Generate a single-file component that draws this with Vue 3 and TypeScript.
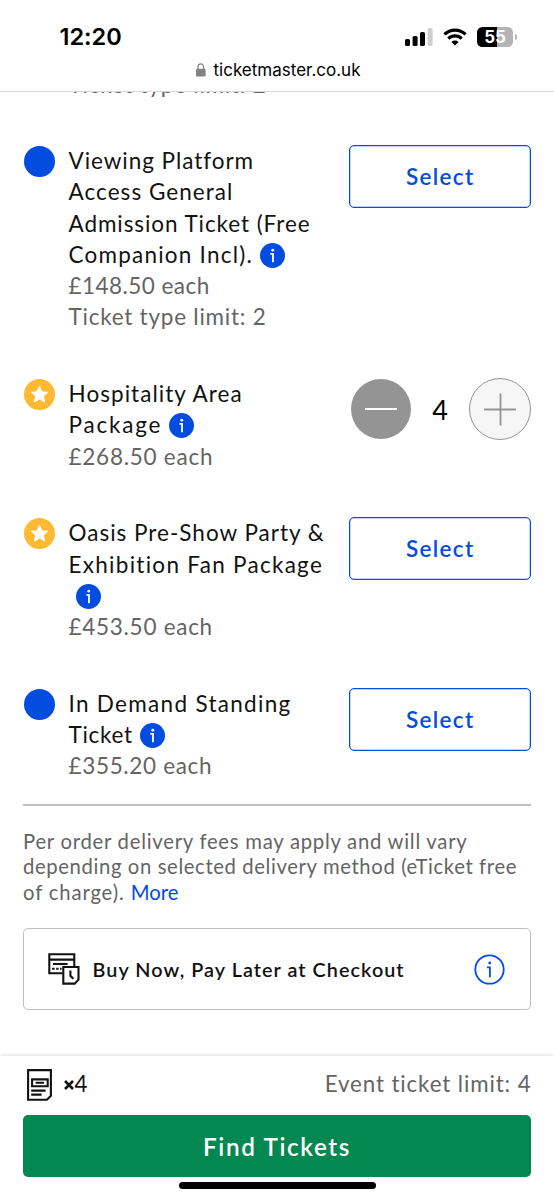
<script setup lang="ts">
import { ref } from 'vue'

interface Line {
  text: string
  tracking: number
  muted?: boolean
  info?: boolean
}

interface Ticket {
  id: string
  kind: 'standard' | 'package'
  stepper: boolean
  lines: Line[]
}

const quantity = ref(4)

const tickets: Ticket[] = [
  {
    id: 'viewing-platform',
    kind: 'standard',
    stepper: false,
    lines: [
      { text: 'Viewing Platform', tracking: 0.95 },
      { text: 'Access General', tracking: 1.05 },
      { text: 'Admission Ticket (Free', tracking: 0.92 },
      { text: 'Companion Incl).', tracking: 1.22, info: true },
      { text: '£148.50 each', tracking: 0.45, muted: true },
      { text: 'Ticket type limit: 2', tracking: 0.76, muted: true },
    ],
  },
  {
    id: 'hospitality',
    kind: 'package',
    stepper: true,
    lines: [
      { text: 'Hospitality Area', tracking: 1.05 },
      { text: 'Package', tracking: 1.8, info: true },
      { text: '£268.50 each', tracking: 0.75, muted: true },
    ],
  },
  {
    id: 'pre-show',
    kind: 'package',
    stepper: false,
    lines: [
      { text: 'Oasis Pre-Show Party &', tracking: 1 },
      { text: 'Exhibition Fan Package', tracking: 1.28 },
      { text: '', tracking: 0, info: true },
      { text: '£453.50 each', tracking: 0.72, muted: true },
    ],
  },
  {
    id: 'standing',
    kind: 'standard',
    stepper: false,
    lines: [
      { text: 'In Demand Standing', tracking: 1.3 },
      { text: 'Ticket', tracking: 0.7, info: true },
      { text: '£355.20 each', tracking: 0.66, muted: true },
    ],
  },
]
</script>

<template>
  <div class="screen">
    <header class="top">
      <div class="status">
        <span class="clock">12:20</span>
        <div class="indicators">
          <svg class="signal" viewBox="0 0 28 18" width="28" height="18">
            <rect x="0" y="11" width="5" height="7" rx="1.6" />
            <rect x="7.6" y="8" width="5" height="10" rx="1.6" />
            <rect x="15" y="4" width="5" height="14" rx="1.6" />
            <rect x="22.6" y="0" width="5" height="18" rx="1.6" fill="#cfcfcf" />
          </svg>
          <svg class="wifi" viewBox="0 0 24 18" width="24" height="18">
            <g fill="none" stroke="#000" stroke-width="3.1">
              <path d="M1.4 6.4a15.2 15.2 0 0 1 21.2 0" />
              <path d="M5.3 10.6a9.6 9.6 0 0 1 13.4 0" />
            </g>
            <path d="M12 17.6l-3.6-3.7a5.2 5.2 0 0 1 7.2 0z" />
          </svg>
          <div class="battery">
            <span>55</span>
            <i class="nub"></i>
          </div>
        </div>
      </div>
      <div class="address">
        <svg viewBox="0 0 10 14" width="10" height="14">
          <rect x="0" y="5.8" width="9.6" height="7.8" rx="1.4" fill="#828285" />
          <path d="M2 6.4V3.8a2.8 2.9 0 0 1 5.6 0v2.6" fill="none" stroke="#828285" stroke-width="1.2" />
        </svg>
        <span>ticketmaster.co.uk</span>
      </div>
    </header>

    <main class="content">
      <div class="scrolled"><span class="muted">Ticket type limit: 2</span></div>

      <section v-for="t in tickets" :key="t.id" class="ticket">
        <svg class="badge" viewBox="0 0 31 31" width="31" height="31">
          <circle cx="15.5" cy="15.5" r="15.5" :fill="t.kind === 'standard' ? '#024ddf' : '#ffb932'" />
          <path
            v-if="t.kind === 'package'"
            d="M15.5 7.8l2.2 5 5.6.5-4.2 3.7 1.3 5.6-4.9-2.9-4.9 2.9 1.3-5.6-4.2-3.7 5.6-.5z"
            fill="#fff"
            stroke="#fff"
            stroke-width="1.3"
            stroke-linejoin="round"
          />
        </svg>

        <div class="details">
          <div v-for="(l, i) in t.lines" :key="i" class="line" :class="{ muted: l.muted }">
            <span v-if="l.text" class="label" :style="{ letterSpacing: l.tracking + 'px' }">{{ l.text }}</span>
            <svg v-if="l.info" class="info" viewBox="0 0 25 25" width="25" height="25">
              <circle cx="12.5" cy="12.5" r="12.5" fill="#024ddf" />
              <circle cx="12.8" cy="7.2" r="1.4" fill="#fff" />
              <path d="M10.4 10.8h2.6v8.4" fill="none" stroke="#fff" stroke-width="1.8" />
            </svg>
          </div>
        </div>

        <div v-if="t.stepper" class="stepper">
          <button class="minus" aria-label="Remove one">
            <svg viewBox="0 0 60 60" width="60" height="60">
              <path d="M14 30h32" stroke="#fff" stroke-width="2" />
            </svg>
          </button>
          <span class="count">{{ quantity }}</span>
          <button class="plus" aria-label="Add one">
            <svg viewBox="0 0 60 60" width="60" height="60">
              <path d="M14 30.5h32M30.5 14.5v32" stroke="#949494" stroke-width="1.8" />
            </svg>
          </button>
        </div>
        <button v-else class="select"><span>Select</span></button>
      </section>

      <hr class="rule" />

      <p class="fees">
        <span class="fee-first">Per order delivery fees may apply and will vary</span><br />
        <span class="fee-second">depending on selected delivery method (eTicket free</span><br />
        <span class="fee-third">of charge). </span><a class="more">More</a>
      </p>

      <div class="later">
        <svg class="later-icon" viewBox="0 0 32 32" width="32" height="32" fill="none" stroke="#121212" stroke-width="2.1">
          <path d="M14.6 20.3H1.3V1.3h25v12.2M1.3 6.6h25" />
          <path d="M5 11h14.6" />
          <path d="M4 15.8h2.6M8.2 15.8h2.4M12 15.8h1.6" />
          <path d="M15.3 14h15.2v12.6l-3.8 4H15.3z" />
          <path d="M22.4 17.4v5.4l2.9 2.9" />
        </svg>
        <span class="later-text">Buy Now, Pay Later at Checkout</span>
        <svg class="later-info" viewBox="0 0 31 31" width="31" height="31">
          <circle cx="15.5" cy="15.5" r="14.2" fill="none" stroke="#024ddf" stroke-width="1.8" />
          <circle cx="15.7" cy="9" r="1.4" fill="#024ddf" />
          <path d="M12.9 13.3h3v10" fill="none" stroke="#024ddf" stroke-width="1.8" />
        </svg>
      </div>
    </main>

    <footer class="footer">
      <div class="summary">
        <svg viewBox="0 0 25 32" width="25" height="32" fill="none" stroke="#121212" stroke-width="2.1">
          <path d="M1.1 1.1h22.8v25.7l-4 4H1.1z" />
          <path d="M5.1 10.4h15.6v6.8H5.1z" />
          <path d="M8.6 13.8h8.4M4.2 21.6h14.4M4.2 25.6h10.4" />
        </svg>
        <svg class="times" viewBox="0 0 10 10" width="10" height="10">
          <path d="M1 1l8 8M9 1l-8 8" stroke="#121212" stroke-width="2.5" />
        </svg>
        <span class="total">{{ quantity }}</span>
        <span class="limit">Event ticket limit: 4</span>
      </div>
      <button class="find"><span>Find Tickets</span></button>
      <div class="home"></div>
    </footer>
  </div>
</template>

<style>
html,
body {
  margin: 0;
  background: #fff;
}
</style>

<style scoped>
.screen {
  width: 554px;
  height: 1200px;
  display: flex;
  flex-direction: column;
  overflow: hidden;
  background: #fff;
  color: #121212;
  font-family: Lato, 'Open Sans', sans-serif;
  font-variant-ligatures: none;
}
button {
  font: inherit;
  padding: 0;
  margin: 0;
  box-sizing: border-box;
  display: flex;
  align-items: center;
  justify-content: center;
}
svg {
  display: block;
  flex: none;
}
.top {
  height: 92px;
  box-sizing: border-box;
  border-bottom: 1px solid #d9d9d9;
  flex: none;
  font-family: Inter, 'Liberation Sans', sans-serif;
  color: #000;
}
.status {
  display: flex;
  justify-content: space-between;
  align-items: center;
  height: 20px;
  padding: 27px 37px 0 59.5px;
}
.clock {
  font-size: 23.5px;
  font-weight: 600;
  line-height: 20px;
}
.indicators {
  display: flex;
  align-items: center;
}
.wifi {
  margin: 0 10px 0 10px;
}
.battery {
  position: relative;
  display: flex;
  width: 36px;
  height: 20px;
  border-radius: 5.5px;
  background: linear-gradient(to right, #000 0 19.5px, #b4b4b4 19.5px);
  color: #fff;
  font-size: 17px;
  font-weight: 700;
  line-height: 20px;
  justify-content: center;
  margin-right: 4px;
}
.nub {
  position: absolute;
  right: -3.5px;
  top: 7px;
  width: 2px;
  height: 6px;
  border-radius: 0 2px 2px 0;
  background: #b4b4b4;
}
.address {
  display: flex;
  align-items: center;
  justify-content: center;
  gap: 8px;
  margin-top: 13px;
  padding-left: 2px;
  height: 20px;
  font-size: 17px;
  line-height: 20px;
}
.content {
  flex: 1;
  min-height: 0;
  padding: 0 23px;
}
.scrolled {
  height: 8px;
  overflow: hidden;
  display: flex;
  align-items: flex-end;
  padding-left: 45.5px;
  font-size: 22.5px;
  line-height: 30px;
  letter-spacing: 0.76px;
}
.muted {
  color: #646464;
}
.ticket {
  display: flex;
  align-items: flex-start;
  margin-top: 45.5px;
}
.badge {
  margin: 0.5px 14px 0 1px;
}
.details {
  flex: 1;
  font-size: 22.5px;
  line-height: 31.25px;
  white-space: nowrap;
  margin-left: -0.5px;
}
.line {
  display: flex;
  align-items: center;
  height: 31.25px;
}
.label {
  margin-top: -0.9px;
}
.info {
  margin: 1px 0 0 7px;
}
.select {
  width: 182px;
  height: 63px;
  margin-top: -0.75px;
  border: 1px solid #024ddf;
  border-radius: 5px;
  background: #fff;
  color: #024ddf;
  font-size: 22.5px;
  font-weight: 600;
  letter-spacing: 1.3px;
  box-shadow: inset 0 0 0 0.5px rgba(2, 77, 223, 0.5);
}
.select span {
  margin-right: -0.5px;
}
.stepper {
  display: flex;
  align-items: center;
  justify-content: space-between;
  width: 180px;
  height: 63px;
  margin-top: -1px;
}
.minus {
  width: 60px;
  height: 60px;
  border: 0;
  border-radius: 50%;
  background: #949494;
}
.count {
  font-size: 27px;
  color: #000;
}
.plus {
  width: 62px;
  height: 62px;
  border: 1px solid #949494;
  border-radius: 50%;
  background: #f6f6f6;
}
.rule {
  border: 0;
  height: 1.5px;
  margin: 22px 0 0;
  background: #bfbfbf;
}
.fees {
  margin: 23.1px 0 0;
  font-size: 20.3px;
  line-height: 25.75px;
  color: #646464;
  white-space: nowrap;
}
.fee-first {
  letter-spacing: 0.74px;
}
.fee-second {
  letter-spacing: 0.61px;
}
.fee-third {
  letter-spacing: 0.85px;
}
.more {
  color: #024ddf;
  letter-spacing: 0;
}
.later {
  display: flex;
  align-items: center;
  box-sizing: border-box;
  height: 82px;
  margin-top: 22.4px;
  padding: 0 25px 0 24px;
  border: 1px solid #bfbfbf;
  border-radius: 5px;
}
.later-text {
  flex: 1;
  margin-left: 12.5px;
  font-size: 19.8px;
  font-weight: 600;
  letter-spacing: 1.05px;
}
.footer {
  flex: none;
  height: 144.5px;
  box-sizing: border-box;
  padding: 13.5px 23px 0;
  background: #fff;
  box-shadow: 0 -1px 4px rgba(0, 0, 0, 0.12);
}
.summary {
  display: flex;
  align-items: center;
  height: 32px;
  padding-left: 4px;
  font-size: 22.3px;
}
.times {
  margin: 0 1px 0 11.5px;
}
.total,
.limit {
  margin-top: -2.5px;
}
.limit {
  margin-left: auto;
  color: #646464;
  letter-spacing: 0.9px;
  margin-right: -0.5px;
}
.find {
  width: 100%;
  height: 62px;
  margin-top: 13.5px;
  border: 0;
  border-radius: 5px;
  background: #048851;
  color: #fff;
  font-size: 24.3px;
  font-weight: 600;
  letter-spacing: 1.6px;
}
.find span {
  margin: 1px 0 0 0;
}
.home {
  width: 197px;
  height: 7px;
  margin: 5px auto 0;
  border-radius: 4px;
  background: #000;
}
</style>
